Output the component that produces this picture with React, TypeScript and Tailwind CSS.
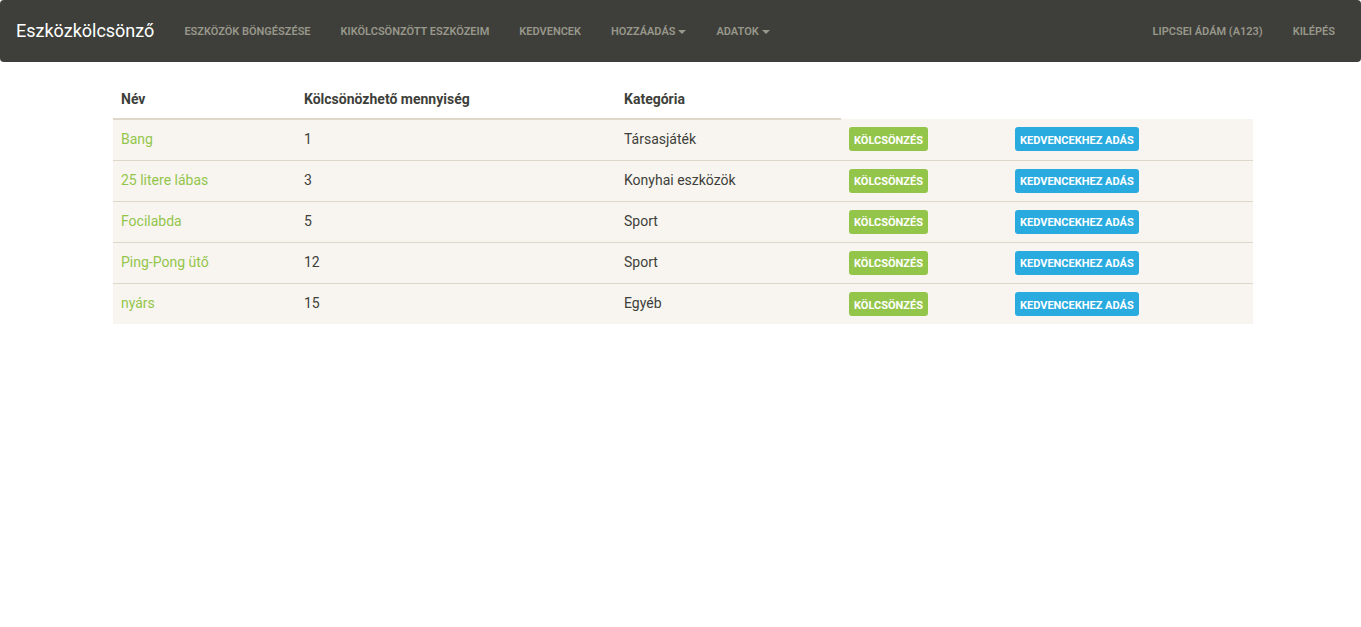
import React from 'react';

const items = [
  { name: 'Bang', qty: 1, cat: 'Társasjáték' },
  { name: '25 litere lábas', qty: 3, cat: 'Konyhai eszközök' },
  { name: 'Focilabda', qty: 5, cat: 'Sport' },
  { name: 'Ping-Pong ütő', qty: 12, cat: 'Sport' },
  { name: 'nyárs', qty: 15, cat: 'Egyéb' },
];

function Caret() {
  return <span className="ml-[3px] inline-block w-0 h-0 border-x-[4px] border-x-transparent border-t-[4px] border-t-[#98978b] align-middle" />;
}

export default function App() {
  return (
    <div className="min-h-screen bg-white font-['Roboto',sans-serif] text-[14px] text-[#3e3f3a]">
      {/* Navbar */}
      <nav className="h-[62px] bg-[#3e3f3a] rounded-[4px] flex items-center">
        <span className="pl-[16px] pr-[15px] text-[18px] text-white leading-none">Eszközkölcsönző</span>
        <ul className="mt-[2px] flex items-center text-[11px] font-semibold uppercase text-[#98978b]">
          <li className="px-[15px]">Eszközök böngészése</li>
          <li className="px-[15px]">Kikölcsönzött eszközeim</li>
          <li className="px-[15px]">Kedvencek</li>
          <li className="px-[15px] flex items-center">Hozzáadás<Caret /></li>
          <li className="px-[15px] flex items-center">Adatok<Caret /></li>
        </ul>
        <ul className="mt-[2px] ml-auto flex items-center text-[11px] font-semibold uppercase text-[#98978b] pr-[11px]">
          <li className="px-[15px]">Lipcsei Ádám (A123)</li>
          <li className="px-[15px]">Kilépés</li>
        </ul>
      </nav>

      {/* Table */}
      <div className="w-[1140px] ml-[113px] mt-[19px]">
        <table className="w-full border-collapse">
          <thead>
            <tr className="h-[38px] text-left">
              <th className="w-[183px] px-[8px] font-bold border-b-2 border-[#dfd7ca] align-middle">Név</th>
              <th className="w-[320px] px-[8px] font-bold border-b-2 border-[#dfd7ca] align-middle">Kölcsönözhető mennyiség</th>
              <th className="w-[225px] px-[8px] font-bold border-b-2 border-[#dfd7ca] align-middle">Kategória</th>
              <th className="w-[166px]"></th>
              <th></th>
            </tr>
          </thead>
          <tbody className="bg-[#f8f5f0]">
            {items.map((it, i) => (
              <tr key={i} className={`h-[41px] ${i > 0 ? 'border-t border-[#dfd7ca]' : ''}`}>
                <td className="px-[8px] text-[#93c54b]">{it.name}</td>
                <td className="px-[8px]">{it.qty}</td>
                <td className="px-[8px]">{it.cat}</td>
                <td className="px-[8px]">
                  <span className="inline-flex items-center h-[24px] pt-[4px] px-[5px] rounded-[3px] bg-[#93c54b] text-white text-[11px] font-bold uppercase">Kölcsönzés</span>
                </td>
                <td className="px-[8px]">
                  <span className="inline-flex items-center h-[24px] pt-[4px] px-[5px] rounded-[3px] bg-[#29abe0] text-white text-[11px] font-bold uppercase">Kedvencekhez adás</span>
                </td>
              </tr>
            ))}
          </tbody>
        </table>
      </div>
    </div>
  );
}
